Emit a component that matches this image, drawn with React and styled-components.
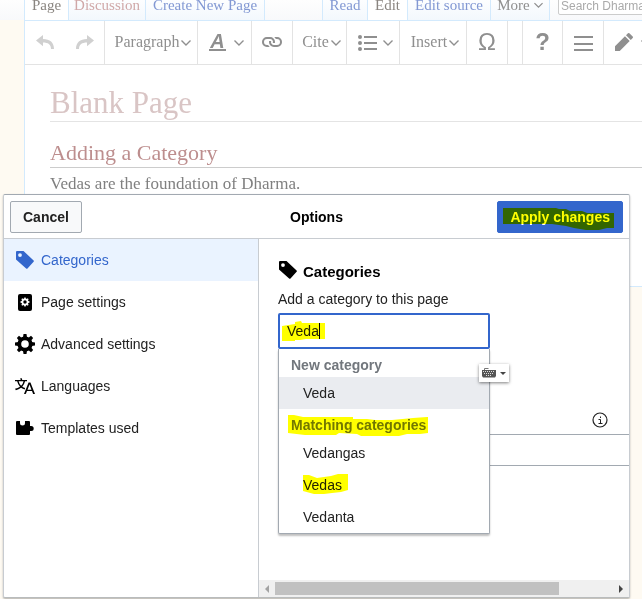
import React from "react";
import styled, { createGlobalStyle, css } from "styled-components";

const GlobalStyle = createGlobalStyle`
  * { box-sizing: border-box; }
  body { margin: 0; background: #fefaf2; }
  button, input { font: inherit; }
`;

const serif = '"Liberation Serif", "Times New Roman", serif';
const sans = '"Liberation Sans", Arial, sans-serif';
const paleBlue = "#d3eafd";

const Page = styled.div`
  position: relative;
  min-height: 100vh;
  overflow: hidden;
  font-family: ${sans};
`;

/* Wiki page behind the dialog */

const TabBar = styled.header`
  display: flex;
  height: 20px;
  padding-left: 24px;
  background: linear-gradient(#fefefe, #f8f9fb);
`;

const TabGroup = styled.nav`
  display: flex;
  flex: none;
  border-left: 1px solid ${paleBlue};
  margin-right: ${(p) => p.$gap || 0}px;
`;

const Tab = styled.a`
  display: flex;
  justify-content: center;
  gap: 4px;
  width: ${(p) => p.$width}px;
  height: 20px;
  border-right: 1px solid ${paleBlue};
  font: 15px/10px ${serif};
  white-space: nowrap;
  text-decoration: none;
  color: ${(p) => p.$color || "#8298d3"};
  background: ${(p) => (p.$active ? "#fff" : "linear-gradient(#fdfeff, #f3f8fd)")};
`;

const SearchBox = styled.input`
  flex: 1;
  min-width: 100px;
  height: 26px;
  margin: -11px -14px 0 8px;
  padding: 8px 2px 0;
  border: 1px solid #ccc;
  border-radius: 2px;
  background: #fff;
  font: 12px ${sans};
  color: #aaa;
  &::placeholder { color: #aaa; opacity: 1; }
`;

const Content = styled.main`
  margin-left: 24px;
  min-height: 267px;
  border: solid ${paleBlue};
  border-width: 1px 0 1px 1px;
  background: #fff;
`;

const Toolbar = styled.div`
  display: flex;
  height: 44px;
  overflow: hidden;
  border-bottom: 1px solid #e3e3e3;
`;

const Tool = styled.button`
  display: flex;
  flex: none;
  align-items: center;
  justify-content: center;
  gap: ${(p) => p.$gap || 2}px;
  width: ${(p) => p.$width}px;
  padding: 0 0 2px ${(p) => (p.$menu ? 4 : 0)}px;
  border: 0;
  border-right: ${(p) => (p.$last ? "0" : "1px solid #e3e3e3")};
  background: none;
  font: 16px/20px ${serif};
  color: #8f8f8f;
`;

const Glyph = styled.span`
  font: ${(p) => (p.$bold ? "bold" : "normal")} 24px/24px ${sans};
`;

const ToolSpacer = styled.span`
  width: 15px;
  flex: none;
  border-right: 1px solid #e3e3e3;
`;

const Underlined = styled.span`
  padding: 0 1px;
  border-bottom: 2px solid #8f8f8f;
  font: italic bold 20px/16px ${sans};
`;

const Article = styled.article`
  padding: 20px 0 0 25px;
  font-family: ${serif};
`;

const Title = styled.h1`
  margin: 0;
  border-bottom: 1px solid #e4e4e4;
  font: 31px/36px ${serif};
  color: #d9c5c5;
`;

const Subtitle = styled.h2`
  margin: 17px 0 0;
  padding-bottom: 1px;
  border-bottom: 1px solid #ccc;
  font: 22px/27px ${serif};
  color: #bd8e8e;
`;

const Paragraph = styled.p`
  margin: 6px 0 0;
  font: 17px/20px ${serif};
  color: #808080;
`;

/* Dialog */

const Dialog = styled.section`
  position: absolute;
  inset: 194px 12px 1px 3px;
  display: flex;
  flex-direction: column;
  border: 1px solid #a2a9b1;
  border-color: #a2a9b1 #c8ccd1 #b9bcbd;
  border-radius: 2px;
  background: #fff;
  box-shadow: 0 1px 2px rgba(0, 0, 0, 0.3);
  font-size: 14px;
  line-height: 20px;
  color: #222;
`;

const DialogHeader = styled.div`
  display: flex;
  align-items: center;
  justify-content: space-between;
  height: 44px;
  padding: 0 6px;
  border-bottom: 1px solid #c8ccd1;
`;

const DialogTitle = styled.h2`
  flex: 1;
  margin: 0;
  text-align: center;
  font-size: 14px;
  color: #000;
`;

const HeaderSide = styled.div`
  display: flex;
  flex: 0 0 126px;
  justify-content: ${(p) => p.$align || "flex-start"};
`;

const DialogButton = styled.button`
  position: relative;
  height: 32px;
  padding: 0 12px;
  border: 1px solid #a2a9b1;
  border-radius: 2px;
  background: #f8f9fa;
  font-weight: bold;
  white-space: nowrap;
  color: #222;
  ${(p) =>
    p.$primary &&
    css`
      border-color: #36c;
      background: #36c;
      color: #fff;
    `}
`;

const DialogBody = styled.div`
  display: flex;
  flex: 1;
  min-height: 0;
`;

const Sidebar = styled.nav`
  flex: 0 0 255px;
  border-right: 1px solid #c8ccd1;
`;

const SidebarItem = styled.button`
  display: flex;
  align-items: center;
  gap: 6px;
  width: 100%;
  height: 42px;
  padding: 0 11px;
  border: 0;
  background: ${(p) => (p.$active ? "#eaf3ff" : "none")};
  color: ${(p) => (p.$active ? "#36c" : "#222")};
  svg { color: ${(p) => (p.$active ? "#36c" : "#000")}; }
`;

const Panel = styled.div`
  display: flex;
  flex: 1;
  flex-direction: column;
  min-width: 0;
`;

const PanelContent = styled.div`
  position: relative;
  flex: 1;
  padding: 21px 0 0 19px;
  overflow: hidden;
`;

const PanelTitle = styled.h3`
  display: flex;
  gap: 5px;
  margin: 0 0 5px;
  font-size: 15px;
  line-height: 24px;
  color: #000;
`;

const FieldLabel = styled.label`
  display: block;
  margin-bottom: 4px;
  line-height: 20px;
`;

const Combo = styled.div`
  position: relative;
  width: 212px;
`;

const CategoryInput = styled.input`
  display: block;
  width: 100%;
  height: 36px;
  padding: 0 7px;
  border: 2px solid #36c;
  border-radius: 2px;
  outline: 0;
  background: #fff;
  color: #222;
`;

const Caret = styled.span`
  position: absolute;
  top: 10px;
  left: 41px;
  width: 1px;
  height: 16px;
  background: #000;
`;

const Menu = styled.div`
  position: absolute;
  z-index: 1;
  top: 100%;
  left: 0;
  right: 0;
  border: 1px solid #a2a9b1;
  border-top: 0;
  border-radius: 0 0 2px 2px;
  background: #fff;
  box-shadow: 0 2px 2px rgba(0, 0, 0, 0.25);
`;

const MenuHeading = styled.div`
  position: relative;
  padding: 6px 12px 2px;
  font-weight: bold;
  color: #72777d;
`;

const MenuItem = styled.button`
  position: relative;
  display: block;
  width: 100%;
  height: 32px;
  padding: 0 24px;
  border: 0;
  text-align: left;
  color: #222;
  background: ${(p) => (p.$active ? "#eaecf0" : "none")};
`;

const KeyboardButton = styled.button`
  position: absolute;
  z-index: 2;
  top: 51px;
  right: -19px;
  display: flex;
  align-items: center;
  gap: 4px;
  height: 18px;
  padding: 0 3px;
  border: 0;
  background: #fff;
  box-shadow: 0 1px 3px rgba(0, 0, 0, 0.5);
`;

const InfoRow = styled.div`
  display: flex;
  justify-content: flex-end;
  margin: 63px 21px 6px 0;
`;

const InfoButton = styled.button`
  display: flex;
  padding: 0;
  border: 0;
  background: none;
`;

const SortField = styled.input`
  display: block;
  width: 110%;
  height: 32px;
  border: 1px solid #a2a9b1;
  background: #fff;
`;

const ScrollTrack = styled.div`
  display: flex;
  align-items: center;
  gap: 5px;
  height: 17px;
  padding: 0 5px;
  background: #f0f0f0;
`;

const ScrollThumbArea = styled.div`
  flex: 1;
`;

const ScrollThumb = styled.div`
  width: 84%;
  height: 13px;
  background: #c1c1c1;
`;

const Marker = styled.svg`
  position: absolute;
  top: ${(p) => p.$top}px;
  left: ${(p) => p.$left}px;
  mix-blend-mode: multiply;
  pointer-events: none;
  fill: #ff0;
`;

/* Icons */

const Icon = ({ size = 20, children, ...rest }) => (
  <svg width={size} height={size} viewBox="0 0 20 20" fill="currentColor" aria-hidden="true" {...rest}>
    {children}
  </svg>
);

const Chevron = ({ size = 10 }) => (
  <svg width={size} height={size} viewBox="0 0 10 10" fill="none" stroke="#8f8f8f" strokeWidth="1.4" aria-hidden="true">
    <path d="M.5 3.500 5 8l4.500-4.500" />
  </svg>
);

const UndoIcon = ({ flip }) => (
  <svg width="18" height="14" viewBox="0 0 18 14" fill="#d0d0d0" aria-hidden="true">
    <g transform={flip ? "matrix(-1 0 0 1 18 0)" : undefined}>
      <path d="M0 5.500 7 0v4c7 0 11 3.500 11 10h-3c0-4.500-3-6.500-8-6.500v3.700z" />
    </g>
  </svg>
);

const LinkIcon = () => (
  <Icon>
    <path d="M4.830 15h2.910a4.900 4.900 0 0 1-1.550-2H5a3 3 0 1 1 0-6h3a3 3 0 0 1 2.820 4h2.100a5 5 0 0 0 .08-.83v-.34A4.830 4.830 0 0 0 8.170 5H4.830A4.830 4.830 0 0 0 0 9.830v.34A4.830 4.830 0 0 0 4.830 15" />
    <path d="M15.170 5h-2.910a4.900 4.900 0 0 1 1.550 2H15a3 3 0 1 1 0 6h-3a3 3 0 0 1-2.820-4h-2.100a5 5 0 0 0-.08.83v.34A4.830 4.830 0 0 0 11.830 15h3.340A4.830 4.830 0 0 0 20 10.170v-.34A4.830 4.830 0 0 0 15.170 5" />
  </Icon>
);

const BulletIcon = () => (
  <Icon>
    <circle cx="3" cy="5" r="2" />
    <circle cx="3" cy="11" r="2" />
    <circle cx="3" cy="17" r="2" />
    <path d="M7 4h13v2H7zm0 6h13v2H7zm0 6h13v2H7z" />
  </Icon>
);

const MenuIcon = () => (
  <Icon>
    <path d="M1 4h19v2H1zm0 7h19v2H1zm0 6h19v2H1z" />
  </Icon>
);

const PencilIcon = () => (
  <Icon>
    <path d="m16.770 8 1.940-2a1 1 0 0 0 0-1.410l-3.340-3.300a1 1 0 0 0-1.410 0L12 3.230zM1 14.250V19h4.750l9.960-9.960-4.750-4.750z" />
  </Icon>
);

const TagIcon = () => (
  <Icon>
    <path fillRule="evenodd" d="M2 1h6.500L18.600 10.400a1 1 0 0 1 0 1.400L12.500 18.500a1 1 0 0 1-1.400 0L1 9.500V2a1 1 0 0 1 1-1zm3 2.200a1.900 1.900 0 1 0 0 3.800 1.900 1.900 0 0 0 0-3.800z" />
  </Icon>
);

const teeth = [0, 45, 90, 135, 180, 225, 270, 315];
const GearShape = ({ color = "currentColor" }) => (
  <g>
    <circle cx="10" cy="10" r="5.700" fill="none" stroke={color} strokeWidth="3.800" />
    {teeth.map((a) => (
      <path key={a} d="M8 3.500 8.500 0h3L12 3.500z" fill={color} transform={`rotate(${a} 10 10)`} />
    ))}
  </g>
);

const GearIcon = () => (
  <Icon>
    <GearShape />
  </Icon>
);

const PageSettingsIcon = () => (
  <Icon>
    <rect x="3" y="2" width="14" height="17" rx="2" />
    <g transform="translate(5.500 5.500) scale(.45)">
      <GearShape color="#fff" />
    </g>
  </Icon>
);

const LanguageIcon = () => (
  <Icon>
    <path d="M20 18h-1.440a.6.6 0 0 1-.4-.12.8.8 0 0 1-.23-.31L17 15h-5l-1 2.540a.8.8 0 0 1-.22.3.6.6 0 0 1-.4.140H9l4.550-11.470h1.890zm-3.530-4.310L14.890 9.500a12 12 0 0 1-.39-1.240q-.09.37-.19.69l-.19.56-1.580 4.190zm-6.300-1.580a13.400 13.400 0 0 1-2.910-1.410 11.460 11.460 0 0 0 2.810-5.370H12V4H7.310a4 4 0 0 0-.2-.56C6.870 2.790 6.600 2 6.600 2l-1.470.5s.4.89.6 1.500H0v1.330h2.150A11.230 11.230 0 0 0 5 10.700a17.200 17.200 0 0 1-5 2.100q.56.82.87 1.380a23.300 23.300 0 0 0 5.220-2.510 15.600 15.600 0 0 0 3.560 1.770zM3.630 5.330h4.910a8.100 8.100 0 0 1-2.450 4.450 9.100 9.100 0 0 1-2.460-4.450z" />
  </Icon>
);

const PuzzleIcon = () => (
  <Icon>
    <path d="M1 4a1 1 0 0 1 1-1h3v2a2.500 2.500 0 0 0 5 0V3h4a1 1 0 0 1 1 1v4h1.200a2.300 2.300 0 1 1 0 5H15v3a1 1 0 0 1-1 1H2a1 1 0 0 1-1-1z" />
  </Icon>
);

const InfoIcon = () => (
  <svg width="16" height="16" viewBox="0 0 16 16" fill="none" stroke="#222" aria-hidden="true">
    <circle cx="8" cy="8" r="7" strokeWidth="1.200" />
    <path d="M6.500 7.500h2v4M6.500 11.500h4M8.500 4.500v1.500" />
  </svg>
);

const KeyboardIcon = () => (
  <svg width="14" height="12" viewBox="0 0 14 12" fill="#555" aria-hidden="true">
    <path d="M2.500 3V1.500h4" fill="none" stroke="#777" />
    <path d="M0 3h14v6l-1 1.500H1L0 9z" />
    <path d="M1 4.500h12M2 6.500h10M4 8.500h6" fill="none" stroke="#ddd" strokeWidth="1" strokeDasharray="1 1" />
  </svg>
);

const Triangle = ({ d, color = "#444", width = 6 }) => (
  <svg width={width} height="8" viewBox={`0 0 ${width} 8`} fill={color} aria-hidden="true">
    <path d={d} />
  </svg>
);

const sections = [
  ["Categories", TagIcon],
  ["Page settings", PageSettingsIcon],
  ["Advanced settings", GearIcon],
  ["Languages", LanguageIcon],
  ["Templates used", PuzzleIcon],
];

export default function App() {
  return (
    <Page>
      <GlobalStyle />
      <TabBar>
        <TabGroup $gap={57}>
          <Tab href="#page" $width={44} $active $color="#8a8580">Page</Tab>
          <Tab href="#discussion" $width={77} $color="#d0a8a8">Discussion</Tab>
          <Tab href="#new" $width={119}>Create New Page</Tab>
        </TabGroup>
        <TabGroup>
          <Tab href="#read" $width={45}>Read</Tab>
          <Tab href="#edit" $width={40} $active $color="#8a8580">Edit</Tab>
          <Tab href="#source" $width={83}>Edit source</Tab>
          <Tab href="#more" $width={59} $color="#8f8f8f">More <Chevron size={9} /></Tab>
        </TabGroup>
        <SearchBox aria-label="Search" placeholder="Search Dharmawiki" />
      </TabBar>

      <Content>
        <Toolbar>
          <Tool $width={80} $gap={22} aria-label="Undo and redo"><UndoIcon /><UndoIcon flip /></Tool>
          <Tool $width={93} $menu>Paragraph<Chevron /></Tool>
          <Tool $width={54} $gap={8} $menu aria-label="Text style"><Underlined>A</Underlined><Chevron /></Tool>
          <Tool $width={41} aria-label="Link"><LinkIcon /></Tool>
          <Tool $width={54} $menu>Cite<Chevron /></Tool>
          <Tool $width={53} $gap={6} $menu aria-label="List"><BulletIcon /><Chevron /></Tool>
          <Tool $width={67} $menu>Insert<Chevron /></Tool>
          <Tool $width={41} aria-label="Special character"><Glyph>Ω</Glyph></Tool>
          <ToolSpacer />
          <Tool $width={40} aria-label="Help"><Glyph $bold>?</Glyph></Tool>
          <Tool $width={41} aria-label="Page options"><MenuIcon /></Tool>
          <Tool $width={56} $last $gap={7} aria-label="Switch editor"><PencilIcon /><Chevron /></Tool>
        </Toolbar>
        <Article>
          <Title>Blank Page</Title>
          <Subtitle>Adding a Category</Subtitle>
          <Paragraph>Vedas are the foundation of Dharma.</Paragraph>
        </Article>
      </Content>

      <Dialog role="dialog" aria-labelledby="dialog-title">
        <DialogHeader>
          <HeaderSide><DialogButton>Cancel</DialogButton></HeaderSide>
          <DialogTitle id="dialog-title">Options</DialogTitle>
          <HeaderSide $align="flex-end">
            <DialogButton $primary>
              Apply changes
              <Marker $top={6} $left={5} width="112" height="23" viewBox="0 0 112 23">
                <path d="M0 0h53l3 1h7l4 2h12l5 2h27v15h-7l-8 2H83l-12-2-8-2-14-2H0z" />
              </Marker>
            </DialogButton>
          </HeaderSide>
        </DialogHeader>

        <DialogBody>
          <Sidebar>
            {sections.map(([label, SectionIcon], i) => (
              <SidebarItem key={label} $active={i === 0}>
                <SectionIcon />
                {label}
              </SidebarItem>
            ))}
          </Sidebar>

          <Panel>
            <PanelContent>
              <PanelTitle><TagIcon />Categories</PanelTitle>
              <FieldLabel htmlFor="category">Add a category to this page</FieldLabel>
              <Combo>
                <CategoryInput id="category" defaultValue="Veda" />
                <Caret />
                <Marker $top={8} $left={4} width="43" height="21" viewBox="0 0 43 21">
                  <path d="M0 5 13 3V1l6-1 1 2h23v16H24l-6 1-5 0v1L0 20z" />
                </Marker>
                <Menu>
                  <MenuHeading>New category</MenuHeading>
                  <MenuItem $active>Veda</MenuItem>
                  <MenuHeading>
                    Matching categories
                    <Marker $top={6} $left={9} width="141" height="23" viewBox="0 0 141 23">
                      <path d="M0 0h6l9 2h50v2h14l8 1h17l21-2 14-1h1v16l-8 1-13 0-8 2H73l-4-2-18-1-3 2H17L0 18z" />
                    </Marker>
                  </MenuHeading>
                  <MenuItem>Vedangas</MenuItem>
                  <MenuItem>
                    Vedas
                    <Marker $top={5} $left={24} width="46" height="21" viewBox="0 0 46 21">
                      <path d="M0 1h6l8 3 14-2 7-2h10v16l-7 2-9 1-8 1H11L0 17z" />
                    </Marker>
                  </MenuItem>
                  <MenuItem>Vedanta</MenuItem>
                </Menu>
                <KeyboardButton aria-label="Input method">
                  <KeyboardIcon />
                  <Triangle d="M0 3h6L3 6z" />
                </KeyboardButton>
              </Combo>
              <InfoRow>
                <InfoButton aria-label="Information"><InfoIcon /></InfoButton>
              </InfoRow>
              <SortField aria-label="Sort key" />
            </PanelContent>
            <ScrollTrack>
              <Triangle d="M5 0v8L1 4z" color="#a3a3a3" />
              <ScrollThumbArea><ScrollThumb /></ScrollThumbArea>
              <Triangle d="M1 0v8l4-4z" />
            </ScrollTrack>
          </Panel>
        </DialogBody>
      </Dialog>
    </Page>
  );
}
